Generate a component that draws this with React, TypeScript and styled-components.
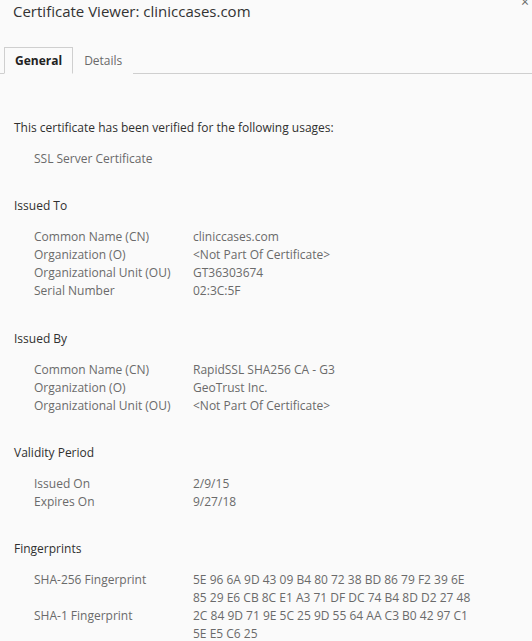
import styled, { createGlobalStyle } from 'styled-components';

const GlobalStyle = createGlobalStyle`
  html, body {
    margin: 0;
    padding: 0;
    background: #fafafa;
  }
  body {
    font-family: "Open Sans", "Noto Sans", sans-serif;
    color: #303030;
  }
`;

const Window = styled.div`
  position: relative;
  width: 532px;
  height: 641px;
  overflow: hidden;
  background: #fafafa;
`;

const Title = styled.div`
  box-sizing: border-box;
  padding: 1px 0 0 13px;
  font-size: 15px;
  color: #333;
  height: 47px;
`;

const Close = styled.div`
  position: absolute;
  top: -8px;
  right: 3px;
  font-size: 14px;
  color: #6a6a6a;
`;

const TabBar = styled.div`
  display: flex;
  padding-left: 4px;
  border-bottom: 1px solid #cfcfcf;
  height: 26px;
`;

const Tab = styled.div<{ $active?: boolean }>`
  display: flex;
  align-items: center;
  padding: 0 10px;
  margin-bottom: -1px;
  font-size: 12px;
  font-weight: ${(p) => (p.$active ? 700 : 400)};
  color: ${(p) => (p.$active ? '#222' : '#6a6a6a')};
  border: 1px solid ${(p) => (p.$active ? '#cfcfcf' : 'transparent')};
  border-bottom: 1px solid ${(p) => (p.$active ? '#fafafa' : 'transparent')};
  background: #fafafa;
`;

const Content = styled.div`
  padding: 45px 0 0 14px;
  font-size: 12px;
  line-height: 18px;
`;

const Intro = styled.div`
  color: #303030;
`;

const Usage = styled.div`
  margin: 13px 0 0 20px;
  color: #6a6a6a;
`;

const Section = styled.div`
  margin-top: 29.3px;
`;

const Heading = styled.div`
  color: #303030;
  margin-bottom: 13px;
`;

const Rows = styled.div`
  display: grid;
  grid-template-columns: 159px 1fr;
  padding-left: 20px;
  color: #6a6a6a;
`;

const Label = styled.div`
  white-space: nowrap;
`;

const Value = styled.div`
  white-space: pre-line;
`;

type Row = [string, string];

const sections: { title: string; rows: Row[] }[] = [
  {
    title: 'Issued To',
    rows: [
      ['Common Name (CN)', 'cliniccases.com'],
      ['Organization (O)', '<Not Part Of Certificate>'],
      ['Organizational Unit (OU)', 'GT36303674'],
      ['Serial Number', '02:3C:5F'],
    ],
  },
  {
    title: 'Issued By',
    rows: [
      ['Common Name (CN)', 'RapidSSL SHA256 CA - G3'],
      ['Organization (O)', 'GeoTrust Inc.'],
      ['Organizational Unit (OU)', '<Not Part Of Certificate>'],
    ],
  },
  {
    title: 'Validity Period',
    rows: [
      ['Issued On', '2/9/15'],
      ['Expires On', '9/27/18'],
    ],
  },
];

// break a hex fingerprint into lines of 16 bytes
const wrapHex = (hex: string) => {
  const bytes = hex.split(' ');
  const lines: string[] = [];
  for (let i = 0; i < bytes.length; i += 16) lines.push(bytes.slice(i, i + 16).join(' '));
  return lines.join('\n');
};

const fingerprints: Row[] = [
  [
    'SHA-256 Fingerprint',
    wrapHex('5E 96 6A 9D 43 09 B4 80 72 38 BD 86 79 F2 39 6E 85 29 E6 CB 8C E1 A3 71 DF DC 74 B4 8D D2 27 48'),
  ],
  ['SHA-1 Fingerprint', wrapHex('2C 84 9D 71 9E 5C 25 9D 55 64 AA C3 B0 42 97 C1 5E E5 C6 25')],
];

export default function App() {
  return (
    <Window>
      <GlobalStyle />
      <Title>Certificate Viewer: cliniccases.com</Title>
      <Close>×</Close>
      <TabBar>
        <Tab $active>General</Tab>
        <Tab>Details</Tab>
      </TabBar>
      <Content>
        <Intro>This certificate has been verified for the following usages:</Intro>
        <Usage>SSL Server Certificate</Usage>
        {[...sections, { title: 'Fingerprints', rows: fingerprints }].map((s) => (
          <Section key={s.title}>
            <Heading>{s.title}</Heading>
            <Rows>
              {s.rows.map(([k, v]) => (
                <>
                  <Label key={k + 'l'}>{k}</Label>
                  <Value key={k + 'v'}>{v}</Value>
                </>
              ))}
            </Rows>
          </Section>
        ))}
      </Content>
    </Window>
  );
}
